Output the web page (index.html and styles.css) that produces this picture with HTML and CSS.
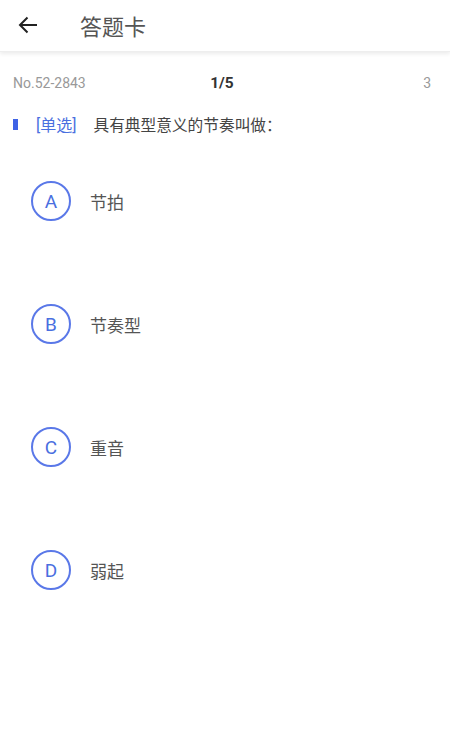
FILE: index.html
```html
<!DOCTYPE html>
<html lang="zh">
<head>
  <meta charset="UTF-8">
  <meta name="viewport" content="width=device-width, initial-scale=1.0">
  <title>答题卡</title>
  <link rel="stylesheet" href="styles.css">
</head>
<body>

<div class="header">
  <span class="back">
    <svg width="20" height="20" viewBox="0 0 20 20"><path d="M19 10H2M9.5 2.5L2 10l7.5 7.5" fill="none" stroke="#222" stroke-width="2"/></svg>
  </span>
  <h1>答题卡</h1>
</div>

<div class="info">
  <span class="no">No.52-2843</span>
  <span class="progress">1/5</span>
  <span class="count">3</span>
</div>

<div class="question">
  <span class="bar"></span>
  <span class="type">[单选]</span>
  <span class="stem">具有典型意义的节奏叫做：</span>
</div>

<div class="options">
  <div class="option"><span class="letter">A</span><span class="text">节拍</span></div>
  <div class="option"><span class="letter">B</span><span class="text">节奏型</span></div>
  <div class="option"><span class="letter">C</span><span class="text">重音</span></div>
  <div class="option"><span class="letter">D</span><span class="text">弱起</span></div>
</div>

</body>
</html>
```

FILE: styles.css
```css
body {
  margin: 0;
  padding: 0;
  background: #fff;
  font-family: Roboto, "Noto Sans CJK SC", sans-serif;
  color: #333;
}
.header {
  height: 49px;
  display: flex;
  align-items: center;
  padding: 0 0 2px 18px;
  box-shadow: 0 2px 4px rgba(0, 0, 0, 0.08);
  border-bottom: 1px solid #eee;
}
.back {
  display: flex;
  width: 20px;
  height: 20px;
}
.header h1 {
  margin: 0 0 0 42px;
  font-size: 22px;
  font-weight: normal;
  color: #555;
}
.info {
  display: grid;
  grid-template-columns: 1fr auto 1fr;
  align-items: center;
  padding: 0 19px 0 13px;
  margin-top: 20px;
  height: 22px;
  font-size: 14px;
  color: #999;
}
.progress {
  color: #333;
  font-weight: bold;
  font-size: 15.5px;
}
.count {
  text-align: right;
}
.question {
  display: flex;
  align-items: center;
  margin-top: 19px;
  padding-left: 13px;
  height: 22px;
  font-size: 15.7px;
}
.bar {
  width: 5px;
  height: 11px;
  background: #3f63e6;
}
.type {
  color: #4a6fe0;
  font-size: 16px;
  margin-left: 18px;
}
.stem {
  margin-left: 17px;
  color: #444;
}
.options {
  padding: 46px 0 0 31px;
}
.option {
  display: flex;
  align-items: center;
  height: 40px;
  margin-bottom: 83px;
}
.letter {
  width: 36px;
  height: 36px;
  border: 2px solid #5a78e8;
  border-radius: 50%;
  display: flex;
  align-items: center;
  justify-content: center;
  font-size: 19px;
  color: #4a6fe0;
}
.text {
  margin-left: 19px;
  font-size: 17px;
  color: #555;
}
```
